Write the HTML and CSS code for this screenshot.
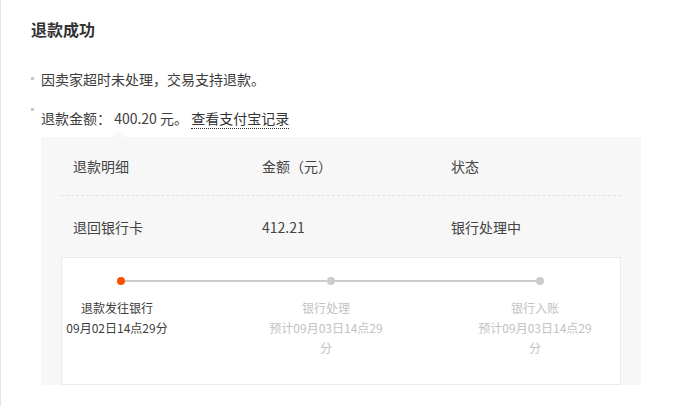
FILE: index.html
```html
<!DOCTYPE html>
<html lang="zh-CN">
<head>
<meta charset="utf-8">
<title>退款成功</title>
<link rel="stylesheet" href="styles.css">
</head>
<body>
<div class="page">
  <h2 class="title">退款成功</h2>
  <ul class="notes">
    <li class="note"><span class="bullet bullet-mid"></span><span>因卖家超时未处理，交易支持退款。</span></li>
    <li class="note"><span class="bullet bullet-top"></span><span>退款金额： 400.20 元。 <a class="link" href="#">查看支付宝记录</a></span></li>
  </ul>
  <div class="detail">
    <div class="row row-head">
      <span>退款明细</span><span>金额（元）</span><span>状态</span>
    </div>
    <div class="row row-body">
      <span>退回银行卡</span><span>412.21</span><span>银行处理中</span>
    </div>
    <div class="progress">
      <div class="track">
        <span class="dot dot-active"></span><span class="seg"></span><span class="dot"></span><span class="seg"></span><span class="dot"></span>
      </div>
      <div class="steps">
        <div class="step step-done"><div>退款发往银行</div><div>09月02日14点29分</div></div>
        <div class="step"><div>银行处理</div><div>预计09月03日14点29分</div></div>
        <div class="step"><div>银行入账</div><div>预计09月03日14点29分</div></div>
      </div>
    </div>
  </div>
</div>
</body>
</html>
```
FILE: styles.css
```css
html, body {
  margin: 0;
  padding: 0;
  background: #fff;
}
body {
  font-family: "Noto Sans CJK SC", "Microsoft YaHei", sans-serif;
  color: #3c3c3c;
}
.page {
  box-sizing: border-box;
  min-height: 406px;
  border-left: 1px solid #e6e6e6;
  padding: 17px 0 0 30px;
}
.title {
  margin: 0;
  font-size: 16px;
  line-height: 24px;
  font-weight: bold;
  color: #333;
}
.notes {
  list-style: none;
  margin: 26px 0 0;
  padding: 0;
}
.note {
  display: flex;
  align-items: flex-start;
  font-size: 14px;
  line-height: 24px;
  color: #3c3c3c;
}
.note + .note {
  margin-top: 15px;
}
.bullet {
  flex: none;
  width: 3px;
  height: 3px;
  background: #c8c8c8;
  margin-right: 7px;
}
.bullet-mid { margin-top: 10px; }
.bullet-top { margin-top: 2px; }
.link {
  color: #333;
  text-decoration: none;
  border-bottom: 1px dotted #333;
}
.detail {
  position: relative;
  box-sizing: border-box;
  width: 600px;
  margin: 7px 0 0 10px;
  padding: 0 20px;
  background: #f7f7f7;
}
.detail::before {
  content: "";
  position: absolute;
  left: 71px;
  top: -6px;
  border-left: 6px solid transparent;
  border-right: 6px solid transparent;
  border-bottom: 6px solid #f7f7f7;
}
.row {
  display: grid;
  grid-template-columns: 189px 189px 1fr;
  align-items: center;
  padding-left: 12px;
  font-size: 14px;
  color: #444;
}
.row-head {
  height: 58px;
  border-bottom: 1px dashed #e2e2e2;
}
.row-body {
  height: 61px;
}
.progress {
  background: #fff;
  border: 1px solid #ebebeb;
  padding: 19px 0 26px;
}
.track {
  display: flex;
  align-items: center;
  width: 427px;
  margin-left: 55px;
}
.dot {
  flex: none;
  width: 8px;
  height: 8px;
  border-radius: 50%;
  background: #cccccc;
}
.dot-active {
  background: #ff5000;
}
.seg {
  flex: 1;
  height: 2px;
  background: #cccccc;
}
.steps {
  display: grid;
  grid-template-columns: 120px 120px 120px;
  column-gap: 89px;
  margin: 13px 0 0 -5px;
}
.step {
  text-align: center;
  font-size: 12px;
  line-height: 20px;
  color: #c2c2c2;
  line-break: anywhere;
}
.step-done {
  color: #3c3c3c;
}
```
